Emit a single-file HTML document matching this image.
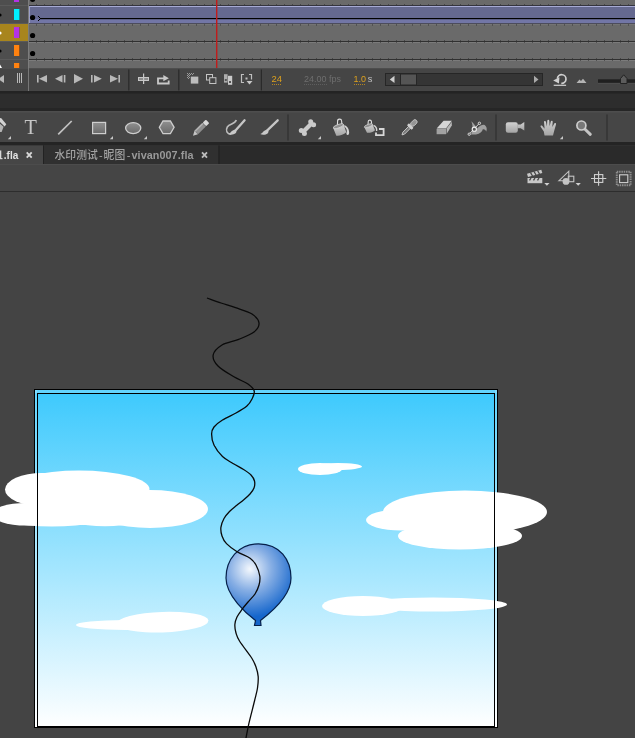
<!DOCTYPE html>
<html><head><meta charset="utf-8">
<style>
html,body{margin:0;padding:0;}
body{width:635px;height:738px;overflow:hidden;background:#444444;position:relative;font-family:"Liberation Sans","Noto Sans CJK SC",sans-serif;}
.abs{position:absolute;}
#stagewrap{left:0;top:191px;width:635px;height:547px;}
</style></head><body>
<svg id="top" class="abs" style="left:0;top:0;will-change:transform" width="635" height="192" viewBox="0 0 635 192" font-family="'Liberation Sans','Noto Sans CJK SC',sans-serif">
<defs>
<pattern id="ticksD" x="36" y="0" width="8" height="1" patternUnits="userSpaceOnUse"><rect x="0" y="0" width="1" height="1" fill="#525252"/></pattern>
<pattern id="ticksU" x="36" y="0" width="8" height="1" patternUnits="userSpaceOnUse"><rect x="0" y="0" width="1" height="1" fill="#484848"/></pattern>
<linearGradient id="gfill" x1="0" y1="0" x2="0" y2="1"><stop offset="0" stop-color="#909090"/><stop offset="1" stop-color="#6a6a6a"/></linearGradient>
<linearGradient id="gic" x1="0" y1="0" x2="0" y2="1"><stop offset="0" stop-color="#d2d2d2"/><stop offset="1" stop-color="#a4a4a4"/></linearGradient>
</defs>
<!-- TIMELINE -->
<rect x="0" y="0" width="635" height="68" fill="#6a6a6a"/>
<rect x="29" y="6" width="606" height="17" fill="#656990"/>
<rect x="29" y="19" width="606" height="4" fill="#7276a6"/>
<rect x="29" y="6" width="606" height="1" fill="#a6aad4"/>
<rect x="29" y="6" width="1" height="17" fill="#9a9ec8"/>
<g fill="#303030">
<rect x="29" y="5" width="606" height="1" fill="#35353f"/><rect x="29" y="23" width="606" height="1" fill="#4c4c5c"/><rect x="29" y="41" width="606" height="1"/><rect x="29" y="59" width="606" height="1"/>
</g>
<g fill="#7b7b7b"><rect x="29" y="42" width="606" height="1"/><rect x="29" y="60" width="606" height="1"/><rect x="29" y="24" width="606" height="1" fill="#747474"/></g>
<rect x="29" y="4" width="606" height="1" fill="url(#ticksU)"/>
<rect x="29" y="24" width="606" height="2" fill="url(#ticksD)"/>
<rect x="29" y="40" width="606" height="1" fill="url(#ticksU)"/>
<rect x="29" y="42" width="606" height="1" fill="url(#ticksD)"/>
<rect x="29" y="58" width="606" height="1" fill="url(#ticksU)"/>
<rect x="29" y="60" width="606" height="1" fill="url(#ticksD)"/>
<!-- layer panel -->
<rect x="0" y="0" width="28" height="68" fill="#4e4e4e"/>
<rect x="0" y="24" width="28" height="18" fill="#a8851d"/>
<g fill="#5a5a5a"><rect x="0" y="5" width="28" height="1"/><rect x="0" y="23" width="28" height="1"/><rect x="0" y="41" width="28" height="1" /><rect x="0" y="59" width="28" height="1"/></g>
<rect x="28" y="0" width="1" height="68" fill="#7c7c7c"/>
<rect x="14" y="0" width="5" height="2" fill="#b432e6"/>
<rect x="14" y="9" width="5" height="11" fill="#00f0ff"/><rect x="19" y="9" width="1" height="11" fill="#1b8f96"/>
<rect x="14" y="27" width="5" height="11" fill="#b432e6"/><rect x="19" y="27" width="1" height="11" fill="#8a5a50"/>
<rect x="14" y="45" width="5" height="11" fill="#ff8210"/><rect x="19" y="45" width="1" height="11" fill="#8a4e1c"/>
<rect x="14" y="63" width="5" height="5" fill="#ff8210"/><rect x="19" y="63" width="1" height="5" fill="#8a4e1c"/>
<circle cx="0" cy="15" r="1.6" fill="#000"/><circle cx="0" cy="33" r="1.6" fill="#fff"/><circle cx="0" cy="51" r="1.6" fill="#000"/>
<path d="M0,64.500 L2,68 L0,68 Z" fill="#fff"/>
<g fill="#000"><circle cx="32.600" cy="-0.500" r="2.600"/><circle cx="32.600" cy="17.500" r="2.600"/><circle cx="32.600" cy="35.500" r="2.600"/><circle cx="32.600" cy="53.500" r="2.600"/></g>
<path d="M38,16 L40.500,18.500 L38,21" fill="none" stroke="#000" stroke-width="1"/>
<rect x="40" y="18" width="595" height="1.200" fill="#000"/>
<rect x="216" y="0" width="1.400" height="68" fill="#c01c1c"/>
<!-- CONTROL BAR -->
<rect x="0" y="68" width="635" height="23" fill="#454545"/>
<rect x="0" y="68" width="635" height="1" fill="#4d4d4d"/>
<rect x="28" y="68" width="1" height="23" fill="#777"/>
<g fill="#b8b8b8">
<path d="M4,75 L4,83 L-2,79 Z"/>
<rect x="17" y="73" width="1" height="10"/><rect x="19" y="73" width="1" height="10"/><rect x="21" y="73" width="1" height="10"/>
<rect x="37" y="75" width="1.600" height="7.500"/><path d="M47,75 L47,82.500 L39,78.750 Z"/>
<path d="M62.500,75 L62.500,82.500 L55,78.750 Z"/><rect x="63.800" y="75" width="1.600" height="7.500"/>
<path d="M74,74 L74,83.400 L83,78.700 Z"/>
<rect x="91" y="75" width="1.600" height="7.500"/><path d="M94,75 L94,82.500 L101.800,78.750 Z"/>
<path d="M110,75 L110,82.500 L118,78.750 Z"/><rect x="118.400" y="75" width="1.600" height="7.500"/>
</g>
<rect x="128.200" y="69.500" width="1.200" height="21" fill="#2a2a2a"/><rect x="178.200" y="69.500" width="1.200" height="21" fill="#2a2a2a"/><rect x="260.800" y="69.500" width="1.200" height="21" fill="#2a2a2a"/>
<!-- center frame -->
<rect x="138.500" y="77.500" width="10" height="3" fill="#8e8e8e" stroke="#c8c8c8" stroke-width="1"/><rect x="143" y="73.500" width="1.200" height="10.500" fill="#c8c8c8"/>
<!-- loop -->
<path d="M164,78.400 L158,78.400 L158,83.500 L168.700,83.500 L168.700,80.500" fill="none" stroke="#c8c8c8" stroke-width="1.800"/>
<path d="M163.300,75 L168.900,78.200 L163.300,81.300 Z" fill="#c8c8c8"/>
<!-- onion 1 -->
<g fill="#9a9a9a"><rect x="187" y="73" width="1" height="1"/><rect x="189" y="73" width="1" height="1"/><rect x="191" y="73" width="1" height="1"/><rect x="188" y="74" width="1" height="1"/><rect x="190" y="74" width="1" height="1"/><rect x="192" y="74" width="1" height="1"/><rect x="187" y="75" width="1" height="1"/><rect x="189" y="75" width="1" height="1"/><rect x="188" y="76" width="1" height="1"/><rect x="187" y="77" width="1" height="1"/><rect x="189" y="77" width="1" height="1"/><rect x="188" y="78" width="1" height="1"/><rect x="193" y="73" width="1" height="1"/></g>
<rect x="190.800" y="76.600" width="7.500" height="7" fill="#bcbcbc"/>
<!-- onion 2 -->
<rect x="206.500" y="74.500" width="6" height="5.500" fill="none" stroke="#c4c4c4"/><rect x="209.700" y="77.700" width="6.200" height="5.800" fill="#454545" stroke="#c4c4c4"/>
<!-- edit multiple -->
<rect x="224" y="74.200" width="3.600" height="8.400" fill="#adadad"/><rect x="228" y="75.800" width="4.200" height="9" fill="#cacaca"/><rect x="229" y="81" width="2" height="2" fill="#555"/><rect x="224.800" y="79" width="2" height="2" fill="#555"/>
<!-- markers -->
<path d="M244,74.500 L241.500,74.500 L241.500,82.500 L244,82.500 M249,74.500 L251.500,74.500 L251.500,79.500" fill="none" stroke="#c0c0c0" stroke-width="1.200"/><rect x="245.500" y="77.500" width="2" height="2" fill="#c0c0c0"/><path d="M246.500,81 L252.500,81 L249.500,84.500 Z" fill="#c8c8c8"/>
<!-- numbers -->
<text x="271.500" y="82" font-size="9.300" fill="#dda11e" textLength="10.500" lengthAdjust="spacingAndGlyphs">24</text>
<text x="304" y="82" font-size="9.300" fill="#6e6e6e" textLength="37" lengthAdjust="spacingAndGlyphs">24.00 fps</text>
<text x="353.500" y="82" font-size="9.300" fill="#dda11e" textLength="12.500" lengthAdjust="spacingAndGlyphs">1.0</text>
<text x="367.800" y="82" font-size="9.300" fill="#c0c0c0">s</text>
<g fill="#b48520"><rect x="272" y="84" width="1" height="1"/><rect x="274" y="84" width="1" height="1"/><rect x="276" y="84" width="1" height="1"/><rect x="278" y="84" width="1" height="1"/><rect x="280" y="84" width="1" height="1"/>
<rect x="354" y="84" width="1" height="1"/><rect x="356" y="84" width="1" height="1"/><rect x="358" y="84" width="1" height="1"/><rect x="360" y="84" width="1" height="1"/><rect x="362" y="84" width="1" height="1"/><rect x="364" y="84" width="1" height="1"/></g>
<g fill="#5e5e5e"><rect x="304" y="84" width="1" height="1"/><rect x="306" y="84" width="1" height="1"/><rect x="308" y="84" width="1" height="1"/><rect x="310" y="84" width="1" height="1"/><rect x="312" y="84" width="1" height="1"/><rect x="314" y="84" width="1" height="1"/><rect x="316" y="84" width="1" height="1"/><rect x="318" y="84" width="1" height="1"/><rect x="320" y="84" width="1" height="1"/><rect x="322" y="84" width="1" height="1"/><rect x="324" y="84" width="1" height="1"/><rect x="326" y="84" width="1" height="1"/></g>
<!-- scrollbar -->
<rect x="385.500" y="73.500" width="157" height="12" fill="#353535" stroke="#262626"/>
<rect x="386" y="74" width="14" height="11" fill="#3d3d3d"/>
<path d="M394.500,75.800 L394.500,83 L389.800,79.400 Z" fill="#cfcfcf"/>
<rect x="400.500" y="74" width="16" height="11" fill="#555" stroke="#262626"/>
<path d="M534,75.800 L534,83 L538.500,79.400 Z" fill="#aaa"/>
<!-- reset -->
<path d="M557.400,78.600 A4.300,4.300 0 1 1 561.300,83.300" fill="none" stroke="#d0d0d0" stroke-width="1.700"/><path d="M553.200,80.600 L559.400,77.300 L559,83.600 Z" fill="#d0d0d0"/><rect x="553.700" y="84.700" width="12.400" height="1.200" fill="#d0d0d0"/>
<path d="M576.500,83 L579.500,79.500 L581,81 L583,78.800 L586.500,83 Z" fill="#b4b4b4"/>
<rect x="598" y="79.300" width="37" height="3.600" fill="#202020"/><rect x="598" y="82.900" width="37" height="0.800" fill="#525252"/>
<path d="M620.500,83.500 L620.500,78.500 L623.700,74.800 L627,78.500 L627,83.500 Z" fill="#5c5c5c" stroke="#222" stroke-width="1"/>
<!-- BAND -->
<rect x="0" y="91" width="635" height="20" fill="#2d2d2d"/><rect x="0" y="91" width="635" height="2.500" fill="#232323"/><rect x="0" y="108" width="635" height="3.500" fill="#262626"/>
<!-- TOOLBAR -->
<rect x="0" y="111.500" width="635" height="31" fill="#464646"/><rect x="0" y="111.300" width="635" height="1" fill="#565656"/>
<rect x="0" y="142" width="635" height="3.500" fill="#242424"/>
<!-- TOOLS -->
<g fill="#2b2b2b"><rect x="287.500" y="114.500" width="1" height="26"/><rect x="495.500" y="114.500" width="1" height="26"/><rect x="606.500" y="114.500" width="1" height="26"/></g>
<g fill="#c8c8c8"><path d="M11,136 L11,139.200 L7.800,139.200 Z"/><path d="M113,136 L113,139.200 L109.800,139.200 Z"/><path d="M147,136 L147,139.200 L143.800,139.200 Z"/><path d="M321,136 L321,139.200 L317.800,139.200 Z"/><path d="M563,136 L563,139.200 L559.800,139.200 Z"/></g>
<!-- pen partial -->
<path d="M-1,117.800 L1.300,118.300 L6.300,124.300 L4.600,126.500 L-1,121 Z" fill="#d2d2d2"/><path d="M-1,123 L3.600,126.800 L1.600,132 L-1,132 Z" fill="#b4b4b4"/>
<text x="24.600" y="134" font-family="'Liberation Serif',serif" font-size="20.300" fill="#c6c6c6">T</text>
<path d="M58.200,134.300 L71.700,121" stroke="#c2c2c2" stroke-width="1.700" fill="none"/>
<rect x="92.600" y="122.400" width="13" height="11.200" fill="url(#gfill)" stroke="#cecece" stroke-width="1.200"/>
<ellipse cx="133.200" cy="128.100" rx="7.600" ry="5.500" fill="url(#gfill)" stroke="#cecece" stroke-width="1.300"/>
<path d="M159.300,127.300 L163,121 L170.400,121 L174.100,127.300 L170.400,133.600 L163,133.600 Z" fill="url(#gfill)" stroke="#cecece" stroke-width="1.300"/>
<!-- pencil -->
<g transform="translate(193,135.700) rotate(-44.500)"><path d="M0,0 L4.500,-2.500 L4.500,2.500 Z" fill="#c4c4c4"/><rect x="4.500" y="-2.500" width="11" height="5" fill="#8e8e8e"/><rect x="4.500" y="-2.500" width="11" height="1.500" fill="#b4b4b4"/><rect x="16" y="-2.500" width="4.500" height="5" rx="1" fill="#d8d8d8"/></g>
<!-- art brush -->
<path d="M236.300,120 C235,124.300 229.500,123.300 227.300,127 C225.300,130.500 227,133.800 231,134.200" fill="none" stroke="#bdbdbd" stroke-width="1.600"/>
<path d="M235.500,130.500 L244.600,120.300" stroke="#c6c6c6" stroke-width="2.300" fill="none" stroke-linecap="round"/>
<path d="M228.300,134 C230.300,133.600 231.300,130.600 234.300,129.800 C236.600,129.800 237,132 235.600,133.300 C233.600,135 230,135 228.300,134 Z" fill="#c8c8c8"/>
<!-- brush -->
<path d="M267.300,130.300 L277.700,120.300" stroke="#c6c6c6" stroke-width="2.300" fill="none" stroke-linecap="round"/>
<path d="M260.200,134 C262.500,133.600 263.300,130.600 266.300,129.800 C268.600,129.800 269.200,132 267.600,133.400 C265.600,135.100 262,135 260.200,134 Z" fill="#c8c8c8"/>
<!-- bone -->
<g fill="#cacaca"><path d="M303,132 L312,123" stroke="#cacaca" stroke-width="4.200" fill="none"/><circle cx="301.300" cy="130.600" r="2.500"/><circle cx="304.400" cy="133.500" r="2.500"/><circle cx="310.700" cy="121.800" r="2.500"/><circle cx="313.600" cy="124.700" r="2.500"/></g>
<!-- paint bucket -->
<path d="M337.200,128 L337.600,121.300 A2,2 0 0 1 341.600,121 L342.200,127.500" fill="none" stroke="#e0e0e0" stroke-width="1.100"/>
<path d="M333.200,128 L343.600,124.300 L346.300,132.300 C343.500,135 339,136.200 336.300,135.700 Z" fill="url(#gic)"/>
<ellipse cx="338.400" cy="126.200" rx="5.400" ry="1.700" transform="rotate(-19.500 338.400 126.200)" fill="#8e8e8e" stroke="#d8d8d8" stroke-width="0.700"/>
<path d="M344.300,125 C347,126 348.800,128.500 349,131.300 C349.400,133.200 349,135 347.700,135 C346.300,135 346.200,133.300 346.800,131.800 C347.100,129.800 346.300,127.800 344.300,126.400 Z" fill="#d4d4d4"/>
<!-- ink bottle -->
<path d="M367.900,127 L368.200,121.800 A1.600,1.600 0 0 1 371.400,121.600 L371.800,126" fill="none" stroke="#e0e0e0" stroke-width="1.100"/>
<path d="M364.300,127.200 L372.500,124.200 L375,130.200 C372.500,132.500 369,133.200 367,132.700 Z" fill="url(#gic)"/>
<ellipse cx="368.400" cy="125.700" rx="4.300" ry="1.400" transform="rotate(-20 368.400 125.700)" fill="#8e8e8e" stroke="#d8d8d8" stroke-width="0.600"/>
<path d="M373.500,125.300 C375.800,126.300 377,128.300 376.600,131" fill="none" stroke="#d4d4d4" stroke-width="1.400"/>
<path d="M379,129 L383.600,129 L383.600,135.100 L376,135.100 L376,132.500" fill="none" stroke="#d8d8d8" stroke-width="1.800"/>
<!-- eyedropper -->
<g transform="translate(402,134.900) rotate(-45.200)"><path d="M0,0 L2.500,-1.300 L11,-1.300 L11,1.300 L2.500,1.300 Z" fill="#7a7a7a" stroke="#cacaca" stroke-width="0.900"/><rect x="10.300" y="-3.300" width="2.800" height="6.600" rx="0.800" fill="#d0d0d0"/><rect x="13.200" y="-2.200" width="7.300" height="4.400" rx="2.100" fill="#959595" stroke="#cfcfcf" stroke-width="0.800"/></g>
<!-- eraser -->
<path d="M436.600,128.400 L443.600,120.800 L451.800,120.800 L446,128.400 Z" fill="#d6d6d6"/><path d="M436.600,129 L446,129 L446,134.200 L436.600,134.200 Z" fill="#a2a2a2"/><path d="M446.600,128.600 L451.800,121.800 L451.800,125.600 L446.600,134 Z" fill="#b8b8b8"/>
<!-- width tool -->
<path d="M471.300,121.300 C473.800,123.500 476,126.500 477,128.500 C479,126.500 481.500,124.800 483.800,124.800 C486.300,125.500 487.500,128.500 486.300,131.500 C485.300,129.500 484,128.800 482.800,129.300 C482.300,131.500 480,134 476,134.600 L471,134.600 C472.800,131 473.200,125.500 471.300,121.300 Z" fill="#a0a0a0"/>
<path d="M469.300,134 L479.300,123.400" stroke="#e4e4e4" stroke-width="0.900" fill="none"/><circle cx="474.300" cy="129.200" r="2.100" fill="#555" stroke="#f0f0f0" stroke-width="1.100"/><circle cx="469.200" cy="134.200" r="1.200" fill="#555" stroke="#ececec" stroke-width="0.800"/><circle cx="479.400" cy="123.300" r="1.200" fill="#555" stroke="#ececec" stroke-width="0.800"/>
<!-- camera -->
<rect x="505.800" y="122.200" width="12" height="10.600" rx="2.200" fill="url(#gic)"/><path d="M517.500,124.600 L520.600,124.600 L524.300,121.900 L524.300,130.400 L520.600,128.300 L517.500,128.300 Z" fill="url(#gic)"/>
<!-- hand -->
<path d="M544.500,135.600 L543.800,131.500 L540.600,126.800 C540.200,125.600 541.500,125 542.400,126 L544.600,128.800 L544,122 C544,120.700 545.800,120.700 546,122 L546.900,126.500 L547.300,120.700 C547.400,119.400 549.200,119.400 549.300,120.700 L549.600,126.300 L550.800,121.400 C551.100,120.200 552.800,120.500 552.700,121.800 L552.300,127 L554.300,123.600 C554.900,122.600 556.300,123.200 556,124.400 L554.300,130.500 L553,135.600 Z" fill="url(#gic)"/>
<!-- magnifier -->
<path d="M584.800,129 L590.300,134.300" stroke="#c4c4c4" stroke-width="3" stroke-linecap="round" fill="none"/><circle cx="581.400" cy="125.500" r="4.500" fill="#787878" stroke="#cdcdcd" stroke-width="1.700"/>
<!-- TABS -->
<rect x="0" y="145.500" width="635" height="18.500" fill="#2a2a2a"/>
<rect x="0" y="145.500" width="43" height="18.500" fill="#464646"/>
<rect x="43.500" y="145.500" width="175" height="18.500" fill="#303030"/><rect x="43" y="145.500" width="1" height="18.500" fill="#222"/><rect x="218.500" y="145.500" width="1" height="18.500" fill="#1f1f1f"/>
<rect x="0" y="150.500" width="1.300" height="8.500" fill="#d8d8d8"/><rect x="0" y="158" width="2.500" height="1.200" fill="#d8d8d8"/>
<text x="3.800" y="159" font-size="10.800" font-weight="bold" fill="#e2e2e2" textLength="14.500" lengthAdjust="spacingAndGlyphs">.fla</text>
<path d="M26.700,152.300 L31.700,157.700 M31.700,152.300 L26.700,157.700" stroke="#d8d8d8" stroke-width="1.800" fill="none"/>
<text x="54.500" y="159" font-size="10.800" font-weight="500" fill="#a2a2a2" textLength="139" lengthAdjust="spacing">水印测试<tspan dx="1">-</tspan><tspan dx="1">昵图</tspan><tspan dx="1.5">-</tspan><tspan dx="1" font-weight="bold" fill="#999">vivan007.fla</tspan></text>
<path d="M202,152.300 L207,157.700 M207,152.300 L202,157.700" stroke="#bdbdbd" stroke-width="1.800" fill="none"/>
<!-- EDIT BAR -->
<rect x="0" y="164" width="635" height="27" fill="#454545"/><rect x="0" y="164" width="635" height="1" fill="#4c4c4c"/><rect x="0" y="191" width="635" height="1" fill="#2d2d2d"/>
<!-- clapper -->
<rect x="527.500" y="178" width="14.800" height="5.200" fill="#c8c8c8"/>
<path d="M527,173.800 L541.300,169.800 L542.300,173 L528,177 Z" fill="#c8c8c8"/>
<g stroke="#454545" stroke-width="1.300"><path d="M530.500,172.500 L532.500,176"/><path d="M534,171.500 L536,175"/><path d="M537.500,170.500 L539.500,174"/><path d="M531,178 L529.500,180.300"/><path d="M535,178 L533.500,180.300"/><path d="M539,178 L537.500,180.300"/></g>
<path d="M544.300,183 L549.500,183 L546.900,185.800 Z" fill="#d0d0d0"/>
<!-- symbol -->
<path d="M558.800,180.800 L568.800,171.200 L568.800,180.800 Z" fill="none" stroke="#c4c4c4" stroke-width="1.100"/>
<rect x="568.300" y="176.200" width="5.500" height="5.500" fill="none" stroke="#c4c4c4" stroke-width="1.100"/>
<circle cx="566" cy="181.400" r="3.400" fill="#c4c4c4"/>
<path d="M575.600,183 L580.800,183 L578.200,185.800 Z" fill="#d0d0d0"/>
<!-- crosshair -->
<path d="M591,178.500 L606.300,178.500 M598.600,171.300 L598.600,185.700" stroke="#d0d0d0" stroke-width="1.100" fill="none"/><rect x="594.500" y="174.600" width="8.300" height="7.800" fill="none" stroke="#d0d0d0" stroke-width="1.100"/>
<!-- clip -->
<rect x="616.800" y="171.700" width="13.800" height="13.600" fill="none" stroke="#8c8c8c" stroke-width="2" stroke-dasharray="1.500 0.800"/><rect x="619.600" y="174.800" width="8.200" height="7.800" fill="#454545" stroke="#d0d0d0" stroke-width="1.100"/>
</svg>

<svg id="stagewrap" class="abs" width="635" height="547" viewBox="0 191 635 547">
<defs>
<linearGradient id="sky" x1="0" y1="0" x2="0" y2="1"><stop offset="0" stop-color="#3cc9fd"/><stop offset="1" stop-color="#ffffff"/></linearGradient>
<radialGradient id="bal" gradientUnits="userSpaceOnUse" cx="250" cy="569" r="48"><stop offset="0" stop-color="#f4f8fd"/><stop offset="0.45" stop-color="#86aee4"/><stop offset="1" stop-color="#1566cc"/></radialGradient>
</defs>
<rect x="34.5" y="389.5" width="463" height="338" fill="url(#sky)" stroke="#000" stroke-width="1"/>
<rect x="35" y="390" width="462" height="3" fill="#ffffff" opacity="0.2"/>
<rect x="35" y="390" width="2" height="337" fill="#ffffff" opacity="0.2"/>
<rect x="495" y="390" width="2" height="337" fill="#ffffff" opacity="0.2"/>
<g fill="#fff">
<ellipse cx="79" cy="489" rx="70.500" ry="18.500"/><ellipse cx="42" cy="489.500" rx="37" ry="16.500"/><ellipse cx="52" cy="514.200" rx="62" ry="12.200"/><ellipse cx="26" cy="514.200" rx="34" ry="11.300"/><ellipse cx="105" cy="514" rx="45" ry="12.300"/><ellipse cx="150" cy="509" rx="58" ry="19"/>
<ellipse cx="320" cy="469" rx="22" ry="6"/><ellipse cx="338" cy="466.5" rx="24" ry="3.5"/>
<ellipse cx="465" cy="512" rx="82" ry="21.5"/><ellipse cx="401" cy="520" rx="35" ry="10.5"/><ellipse cx="460" cy="536" rx="62" ry="13.5"/>
<ellipse cx="363" cy="606" rx="41" ry="10"/><ellipse cx="433" cy="604.5" rx="74" ry="7"/>
<ellipse cx="162.500" cy="622.200" rx="46" ry="10.300" transform="rotate(-2 162.500 622.200)"/><ellipse cx="125" cy="625" rx="49" ry="5"/>
</g>
<rect x="37.5" y="393.5" width="457" height="333" fill="none" stroke="#000" stroke-width="1"/>
<rect x="37" y="726" width="458" height="2" fill="#000"/>
<path d="M258.5,543.8 C280,543.8 291,560 291,578 C291,596 269,614 260.500,620.5 L261,625.5 L254.500,625.5 L255.500,620.5 C247,614 226,596 226,578 C226,560 238,543.8 258.5,543.8 Z" fill="url(#bal)" stroke="#06204a" stroke-width="1.2"/>
<path d="M207.0,298.0 C209.3,298.8 216.2,301.4 221.0,303.0 C225.8,304.6 230.3,305.9 235.5,307.7 C240.7,309.5 248.1,311.4 252.0,314.0 C255.9,316.6 258.7,320.0 259.0,323.0 C259.3,326.0 257.4,329.3 254.0,332.0 C250.6,334.7 244.0,337.2 238.7,339.4 C233.4,341.6 226.2,342.4 222.0,345.0 C217.8,347.6 213.9,351.4 213.2,354.9 C212.5,358.4 214.6,362.4 218.0,366.0 C221.4,369.6 228.9,373.8 233.9,376.8 C238.9,379.8 244.6,381.6 248.0,384.0 C251.4,386.4 253.5,388.5 254.2,391.0 C254.9,393.5 253.2,396.5 252.0,399.0 C250.8,401.5 249.6,403.7 246.9,406.0 C244.2,408.3 240.1,410.7 236.0,413.0 C231.9,415.3 226.2,417.7 222.5,420.0 C218.8,422.3 215.8,424.7 214.0,427.0 C212.2,429.3 211.6,431.0 211.6,434.0 C211.6,437.0 212.2,441.2 214.0,445.0 C215.8,448.8 219.3,453.4 222.5,456.5 C225.7,459.6 229.5,461.3 233.0,463.5 C236.5,465.7 240.6,467.6 243.6,469.5 C246.6,471.4 249.2,473.1 251.0,475.0 C252.8,476.9 254.0,478.8 254.5,481.0 C255.0,483.2 254.8,485.8 254.0,488.0 C253.2,490.2 251.8,492.0 250.0,494.0 C248.2,496.0 245.8,498.1 243.5,500.0 C241.2,501.9 238.8,503.6 236.5,505.5 C234.2,507.4 231.6,509.3 229.5,511.5 C227.4,513.7 225.4,515.9 224.0,518.5 C222.6,521.1 221.2,524.5 220.9,527.4 C220.6,530.3 221.1,533.3 222.0,536.0 C222.9,538.7 224.0,541.0 226.5,543.6 C229.0,546.2 233.2,549.3 237.1,551.7 C241.0,554.1 246.9,556.0 250.1,558.2 C253.2,560.4 254.4,562.0 256.0,565.0 C257.6,568.0 259.3,572.7 259.8,576.0 C260.3,579.3 259.8,582.0 259.0,585.0 C258.2,588.0 256.8,591.2 255.0,594.0 C253.2,596.8 250.2,599.4 248.0,602.0 C245.8,604.6 243.8,606.9 242.0,609.4 C240.2,611.9 238.2,614.5 237.0,617.0 C235.8,619.5 235.1,621.6 234.9,624.3 C234.7,627.0 235.2,630.2 236.0,633.0 C236.8,635.8 236.9,636.8 239.5,641.0 C242.1,645.2 248.9,653.7 251.7,658.0 C254.4,662.3 254.9,663.9 256.0,667.0 C257.1,670.1 257.9,673.1 258.2,676.6 C258.4,680.1 258.1,683.9 257.5,688.0 C256.9,692.1 255.9,695.1 254.5,701.0 C253.1,706.9 250.3,717.2 248.9,723.4 C247.5,729.6 246.7,734.6 246.0,738.0 C245.3,741.4 245.2,743.0 245.0,744.0" fill="none" stroke="#0a0a0a" stroke-width="1.3"/>
</svg>
</body></html>
